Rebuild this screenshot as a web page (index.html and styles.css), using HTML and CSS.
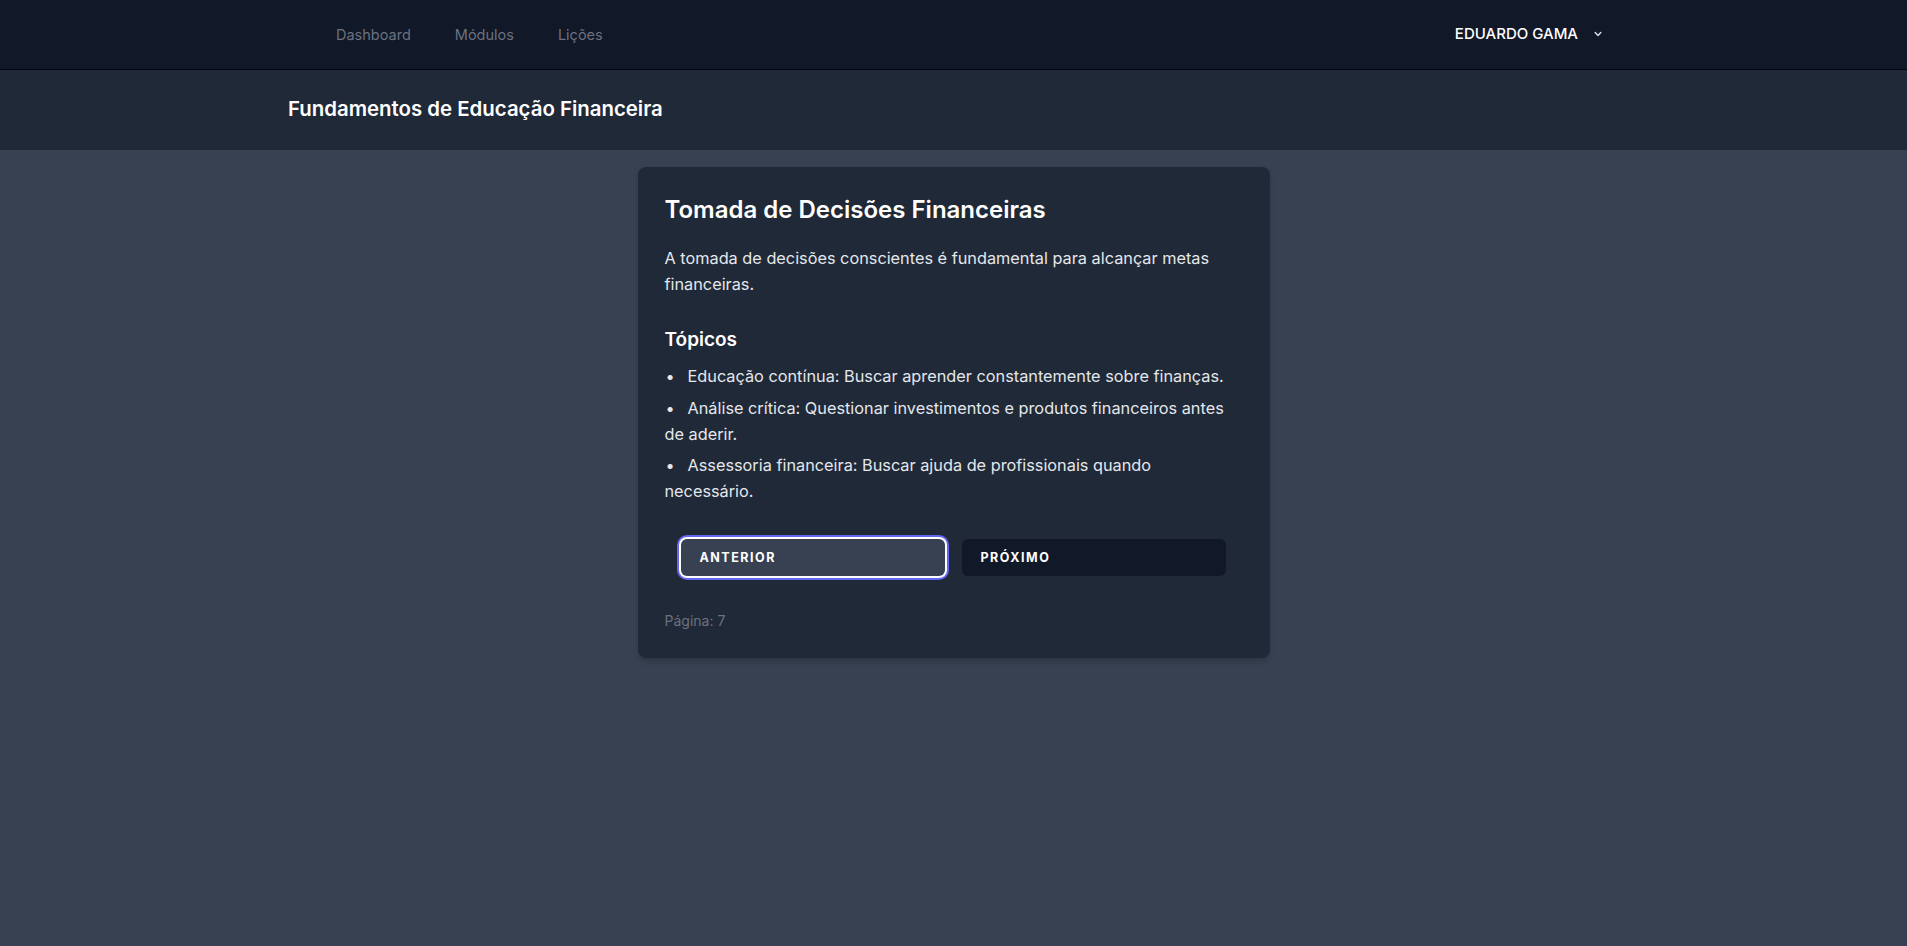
FILE: index.html
```html
<!DOCTYPE html>
<html lang="pt-BR">
<head>
<meta charset="utf-8">
<title>Tomada de Decisões Financeiras</title>
<link rel="stylesheet" href="styles.css">
</head>
<body>
<nav class="topnav">
  <div class="topnav-inner">
    <div class="nav-links">
      <a href="#" class="nav-link">Dashboard</a>
      <a href="#" class="nav-link">Módulos</a>
      <a href="#" class="nav-link">Lições</a>
    </div>
    <button class="user-btn">
      <span>EDUARDO GAMA</span>
      <svg class="chev" width="14" height="14" viewBox="0 0 20 20" fill="currentColor"><path fill-rule="evenodd" d="M5.293 7.293a1 1 0 011.414 0L10 10.586l3.293-3.293a1 1 0 111.414 1.414l-4 4a1 1 0 01-1.414 0l-4-4a1 1 0 010-1.414z" clip-rule="evenodd"/></svg>
    </button>
  </div>
</nav>
<header class="page-header">
  <div class="page-header-inner">
    <h2 class="page-title">Fundamentos de Educação Financeira</h2>
  </div>
</header>
<main class="main">
  <section class="card">
    <h1 class="card-title">Tomada de Decisões Financeiras</h1>
    <p class="card-text">A tomada de decisões conscientes é fundamental para alcançar metas financeiras.</p>
    <h3 class="topics-title">Tópicos</h3>
    <ul class="topics">
      <li>Educação contínua: Buscar aprender constantemente sobre finanças.</li>
      <li>Análise crítica: Questionar investimentos e produtos financeiros antes de aderir.</li>
      <li>Assessoria financeira: Buscar ajuda de profissionais quando necessário.</li>
    </ul>
    <div class="pager">
      <button class="btn btn-prev">ANTERIOR</button>
      <button class="btn btn-next">PRÓXIMO</button>
    </div>
    <p class="page-num">Página: 7</p>
  </section>
</main>
</body>
</html>
```

FILE: styles.css
```css
* { box-sizing: border-box; }
html, body { margin: 0; padding: 0; }
body {
  font-family: Inter, "Noto Sans", "Liberation Sans", sans-serif;
  background: #374151;
  color: #f3f4f6;
  min-height: 946px;
}
.topnav {
  background: #111827;
  height: 70px;
  border-bottom: 1px solid #05070c;
}
.topnav-inner {
  margin-left: 288px;
  width: 1331px;
  height: 69px;
  display: flex;
  align-items: center;
  justify-content: space-between;
  padding: 0 14px 0 48px;
}
.nav-links { display: flex; gap: 44px; }
.nav-link {
  color: #6b7280;
  text-decoration: none;
  font-size: 14.5px;
  line-height: 20px;
}
.user-btn {
  background: none;
  border: 0;
  padding: 0;
  color: #ffffff;
  font-family: inherit;
  font-size: 15px;
  font-weight: 500;
  display: flex;
  align-items: center;
  gap: 13px;
  margin-top: -2px;
}
.chev { color: #e5e7eb; }
.page-header {
  background: #1f2937;
  height: 80px;
}
.page-header-inner {
  margin-left: 288px;
  height: 80px;
  display: flex;
  align-items: center;
}
.page-title {
  margin: 0;
  font-size: 20.4px;
  font-weight: 600;
  color: #ffffff;
  margin-top: -3px;
}
.main {
  padding-top: 17px;
  display: flex;
  justify-content: center;
}
.card {
  width: 632px;
  background: #1f2937;
  border-radius: 8px;
  padding: 27px 28px 27px 27px;
  box-shadow: 0 4px 6px -1px rgba(0,0,0,0.15), 0 2px 4px -2px rgba(0,0,0,0.1);
}
.card-title {
  margin: 0;
  font-size: 24px;
  line-height: 32px;
  font-weight: 600;
  color: #ffffff;
}
.card-text {
  margin: 19px 0 0;
  font-size: 16.3px;
  line-height: 26px;
  color: #e5e7eb;
}
.topics-title {
  margin: 29px 0 0;
  font-size: 19px;
  line-height: 28px;
  font-weight: 600;
  color: #ffffff;
}
.topics {
  margin: 9px 0 0;
  padding: 0;
  list-style: none;
  font-size: 16.3px;
  line-height: 26px;
  color: #e5e7eb;
  display: flex;
  flex-direction: column;
  gap: 5.5px;
}
.topics li::before {
  content: "•";
  display: inline-block;
  width: 22px;
  padding-left: 1px;
}
.pager {
  margin-top: 35px;
  padding: 0 16px;
  display: flex;
  gap: 17px;
}
.btn {
  flex: 1;
  height: 37px;
  border-radius: 6px;
  border: 1px solid transparent;
  padding: 0 18px;
  text-align: left;
  font-family: inherit;
  font-size: 12.5px;
  font-weight: 700;
  letter-spacing: 0.12em;
  color: #ffffff;
}
.btn-prev {
  background: #374151;
  box-shadow: 0 0 0 2px #ffffff, 0 0 0 4px #6366f1;
}
.btn-next {
  background: #111827;
}
.page-num {
  margin: 35px 0 0;
  font-size: 14px;
  line-height: 20px;
  color: #6b7280;
}
```
